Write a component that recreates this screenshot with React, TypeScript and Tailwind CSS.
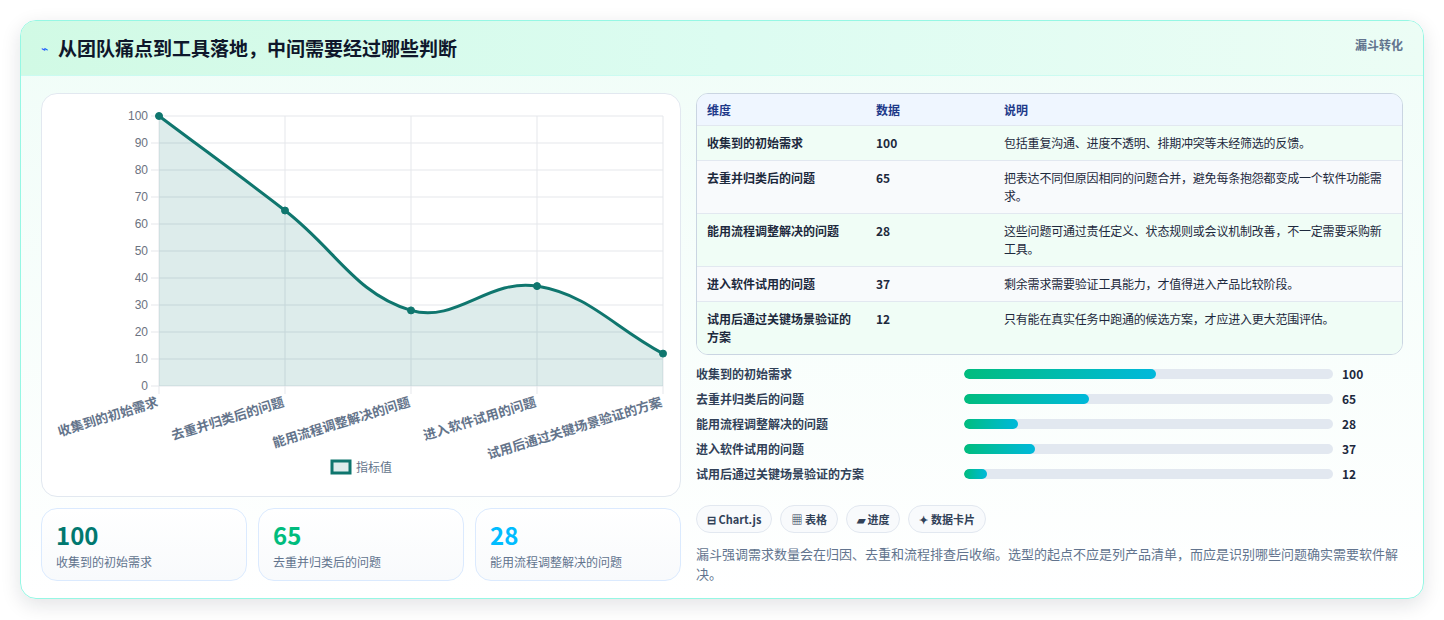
const rows = [
  { d: '收集到的初始需求', v: 100, n: '包括重复沟通、进度不透明、排期冲突等未经筛选的反馈。' },
  { d: '去重并归类后的问题', v: 65, n: '把表达不同但原因相同的问题合并，避免每条抱怨都变成一个软件功能需求。' },
  { d: '能用流程调整解决的问题', v: 28, n: '这些问题可通过责任定义、状态规则或会议机制改善，不一定需要采购新工具。' },
  { d: '进入软件试用的问题', v: 37, n: '剩余需求需要验证工具能力，才值得进入产品比较阶段。' },
  { d: '试用后通过关键场景验证的方案', v: 12, n: '只有能在真实任务中跑通的候选方案，才应进入更大范围评估。' },
];

const X0 = 117;
const STEP = 126;
const Y0 = 292;
const pts = rows.map((r, i) => ({ x: X0 + i * STEP, y: Y0 - r.v * 2.7 }));

function splinePath() {
  const t = 0.4;
  const cps = pts.map((p, i) => {
    const prev = pts[i - 1] || p;
    const next = pts[i + 1] || p;
    const d01 = Math.hypot(p.x - prev.x, p.y - prev.y);
    const d12 = Math.hypot(next.x - p.x, next.y - p.y);
    const s = d01 + d12 || 1;
    const fa = (t * d01) / s;
    const fb = (t * d12) / s;
    return {
      px: p.x - fa * (next.x - prev.x),
      py: Math.min(Y0, Math.max(22, p.y - fa * (next.y - prev.y))),
      nx: p.x + fb * (next.x - prev.x),
      ny: Math.min(Y0, Math.max(22, p.y + fb * (next.y - prev.y))),
    };
  });
  let d = `M${pts[0].x},${pts[0].y}`;
  for (let i = 1; i < pts.length; i++) {
    d += ` C${cps[i - 1].nx},${cps[i - 1].ny} ${cps[i].px},${cps[i].py} ${pts[i].x},${pts[i].y}`;
  }
  return d;
}

function Chart() {
  const line = splinePath();
  const area = `${line} L${pts[4].x},${Y0} L${pts[0].x},${Y0} Z`;
  return (
    <svg width="640" height="403" viewBox="0 0 640 403" className="block">
      {Array.from({ length: 11 }).map((_, i) => {
        const y = Y0 - i * 27;
        return (
          <g key={i}>
            <line x1={X0 - 8} x2={621} y1={y} y2={y} stroke="#e5e7eb" />
            <text x={X0 - 11} y={y + 4} textAnchor="end" fontSize="12" fill="#6b7280" fontFamily="Liberation Sans, sans-serif">
              {i * 10}
            </text>
          </g>
        );
      })}
      {pts.map((p, i) => (
        <line key={i} x1={p.x} x2={p.x} y1={22} y2={Y0 + 8} stroke="#e5e7eb" />
      ))}
      <path d={area} fill="rgba(15,118,110,0.14)" />
      <path d={line} fill="none" stroke="#0f766e" strokeWidth="3" />
      {pts.map((p, i) => (
        <circle key={i} cx={p.x} cy={p.y} r="3.5" fill="#0f766e" stroke="#0f766e" strokeWidth="1" />
      ))}
      {pts.map((p, i) => (
        <text
          key={i}
          x={p.x}
          y={Y0 + 20}
          textAnchor="end"
          fontSize="13"
          fontWeight="600"
          fill="#64748b"
          transform={`rotate(-17 ${p.x} ${Y0 + 20})`}
        >
          {rows[i].d}
        </text>
      ))}
      <rect x="290" y="367" width="18" height="12" fill="rgba(15,118,110,0.14)" stroke="#0f766e" strokeWidth="3" />
      <text x="314" y="378" fontSize="12" fill="#64748b">指标值</text>
    </svg>
  );
}

export default function App() {
  const stats = [
    { v: 100, c: 'text-teal-700', l: '收集到的初始需求' },
    { v: 65, c: 'text-emerald-500', l: '去重并归类后的问题' },
    { v: 28, c: 'text-sky-400', l: '能用流程调整解决的问题' },
  ];
  return (
    <div className="w-[1444px] h-[620px] bg-white p-5" style={{ fontFamily: '"Noto Sans CJK SC", "Noto Sans", sans-serif' }}>
      <div className="h-[579px] rounded-2xl border border-teal-200 shadow-[0_6px_20px_rgba(15,23,42,0.12)] overflow-hidden bg-gradient-to-b from-[#f0fdf8] to-white">
        <div className="h-[55px] flex items-center justify-between px-5 bg-gradient-to-r from-[#d1fae5] via-[#dcfcf1] to-[#ecfdf5] border-b border-teal-100">
          <div className="flex items-center gap-2.5">
            <span className="text-blue-600 text-[12px]">⌁</span>
            <h1 className="text-[19px] font-bold text-slate-900">从团队痛点到工具落地，中间需要经过哪些判断</h1>
          </div>
          <span className="text-[12px] font-semibold text-slate-500 self-start mt-[15px]">漏斗转化</span>
        </div>
        <div className="flex gap-[15px] px-5 pt-[17px]">
          <div className="w-[640px] flex flex-col gap-[11px]">
            <div className="h-[404px] bg-white rounded-2xl border border-slate-200">
              <Chart />
            </div>
            <div className="grid grid-cols-3 gap-[11px]">
              {stats.map((s) => (
                <div key={s.l} className="h-[73px] rounded-2xl border border-blue-100 bg-gradient-to-b from-white to-[#f8fafc] px-[14px] pt-[12px]">
                  <div className={`text-[24px] leading-[28px] font-bold ${s.c}`}>{s.v}</div>
                  <div className="text-[12px] text-slate-500 mt-1">{s.l}</div>
                </div>
              ))}
            </div>
          </div>
          <div className="flex-1">
            <div className="rounded-xl border border-slate-300 overflow-hidden text-[12px]">
              <div className="grid grid-cols-[169px_128px_1fr] h-[32px] items-center bg-[#eff6ff] text-[#1e3a8a] font-semibold px-[10px] border-b border-slate-200">
                <span>维度</span><span>数据</span><span>说明</span>
              </div>
              {rows.map((r, i) => (
                <div
                  key={r.d}
                  className={`grid grid-cols-[169px_128px_1fr] px-[10px] py-[8px] leading-[18px] text-slate-800 ${i % 2 === 0 ? 'bg-[#f0fdf6]' : 'bg-[#f8fafc]'} ${i < 4 ? 'border-b border-slate-200' : ''}`}
                >
                  <span className="font-semibold pr-4">{r.d}</span>
                  <span className="font-semibold">{r.v}</span>
                  <span className="tracking-[-0.2px]">{r.n}</span>
                </div>
              ))}
            </div>
            <div className="mt-[10px] flex flex-col gap-[7px]">
              {rows.map((r) => (
                <div key={r.d} className="flex items-center h-[18px] text-[12px]">
                  <span className="w-[268px] font-semibold text-slate-700">{r.d}</span>
                  <div className="w-[369px] h-[10px] rounded-full bg-slate-200 overflow-hidden">
                    <div className="h-full rounded-full bg-gradient-to-r from-emerald-500 to-cyan-500" style={{ width: `${r.v * 0.52}%` }} />
                  </div>
                  <span className="ml-[9px] font-bold text-slate-800">{r.v}</span>
                </div>
              ))}
            </div>
            <div className="flex gap-2 mt-[22px] text-[11px] font-semibold text-slate-700">
              {['⊟ Chart.js', '▦ 表格', '▰ 进度', '✦ 数据卡片'].map((c) => (
                <span key={c} className="h-[28px] px-[10px] flex items-center rounded-full border border-slate-200 bg-[#f8fafc]">{c}</span>
              ))}
            </div>
            <p className="mt-[11px] text-[13px] leading-[20px] text-slate-500">
              漏斗强调需求数量会在归因、去重和流程排查后收缩。选型的起点不应是列产品清单，而应是识别哪些问题确实需要软件解决。
            </p>
          </div>
        </div>
      </div>
    </div>
  );
}
